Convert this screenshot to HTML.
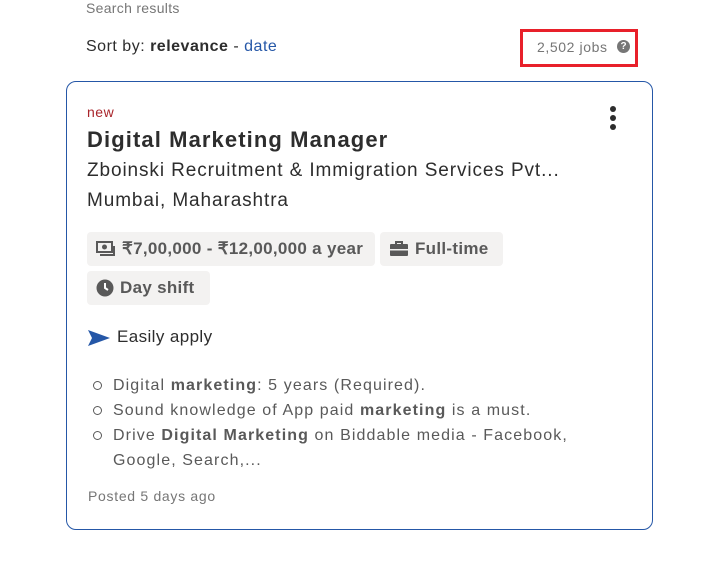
<!DOCTYPE html>
<html><head><meta charset="utf-8"><style>
*{margin:0;padding:0;box-sizing:border-box}
body{width:704px;height:572px;background:#fff;font-family:"Liberation Sans",sans-serif;color:#2d2d2d;position:relative;overflow:hidden}
.a{position:absolute;white-space:nowrap}
.tag{position:absolute;background:#f3f2f1;border-radius:4px;height:34px;font-weight:bold;font-size:17px;color:#595959;padding:0 9px;display:flex;align-items:center;gap:6px;letter-spacing:0.3px;white-space:nowrap}
li{list-style:none;position:relative;padding-left:25px}
li:before{content:"";position:absolute;left:5px;top:8px;width:7px;height:7px;border:1.5px solid #595959;border-radius:50%}
</style></head><body>
<div class="a" style="left:86px;top:0;font-size:14px;color:#767676;letter-spacing:0.3px">Search results</div>
<div class="a" style="left:86px;top:38px;font-size:16px;letter-spacing:0.5px">Sort by: <b>relevance</b> - <span style="color:#2557a7">date</span></div>
<div class="a" style="left:520px;top:29px;width:118px;height:38px;border:3px solid #e8202a"></div>
<div class="a" style="left:537px;top:39px;font-size:14px;color:#767676;letter-spacing:0.6px">2,502 jobs</div>
<div class="a" style="left:617px;top:40px;width:13px;height:13px;border-radius:50%;background:#767676;color:#fff;font-size:10px;font-weight:bold;text-align:center;line-height:13px">?</div>
<div class="a" style="left:66px;top:81px;width:587px;height:449px;border:1px solid #2557a7;border-radius:10px"></div>
<div class="a" style="left:610px;top:106px;width:6px;height:6px;border-radius:50%;background:#2d2d2d"></div>
<div class="a" style="left:610px;top:115px;width:6px;height:6px;border-radius:50%;background:#2d2d2d"></div>
<div class="a" style="left:610px;top:124px;width:6px;height:6px;border-radius:50%;background:#2d2d2d"></div>
<div class="a" style="left:87px;top:104px;font-size:14px;color:#a9252b;letter-spacing:0.5px">new</div>
<div class="a" style="left:87px;top:127px;font-size:22px;font-weight:bold;letter-spacing:1.1px">Digital Marketing Manager</div>
<div class="a" style="left:87px;top:160px;font-size:19px;letter-spacing:0.9px">Zboinski Recruitment &amp; Immigration Services Pvt...</div>
<div class="a" style="left:87px;top:190px;font-size:19px;letter-spacing:0.9px">Mumbai, Maharashtra</div>
<div class="tag" style="left:87px;top:232px;width:288px"><svg width="20" height="16" viewBox="0 0 20 16"><rect x="1" y="1" width="15" height="10" fill="none" stroke="#595959" stroke-width="2"/><circle cx="8.5" cy="6" r="2.5" fill="#595959"/><path d="M18 5v9H4" fill="none" stroke="#595959" stroke-width="2"/></svg>₹7,00,000 - ₹12,00,000 a year</div>
<div class="tag" style="left:380px;top:232px;width:123px"><svg width="20" height="16" viewBox="0 0 20 16"><path d="M7 3V1h6v2" fill="none" stroke="#595959" stroke-width="2"/><rect x="1" y="3" width="18" height="12" rx="1" fill="#595959"/><rect x="1" y="8" width="18" height="1.5" fill="#f3f2f1"/></svg>Full-time</div>
<div class="tag" style="left:87px;top:271px;width:123px"><svg width="18" height="18" viewBox="0 0 18 18"><circle cx="9" cy="9" r="8.5" fill="#595959"/><path d="M9 4v5l3 2" fill="none" stroke="#fff" stroke-width="2"/></svg>Day shift</div>
<svg class="a" style="left:88px;top:330px" width="22" height="16" viewBox="0 0 22 16"><path d="M0 0L22 8L0 16L4 8Z" fill="#2557a7"/></svg>
<div class="a" style="left:117px;top:327px;font-size:17px;letter-spacing:0.4px">Easily apply</div>
<ul class="a" style="left:88px;top:373px;font-size:16px;color:#595959;line-height:25px;letter-spacing:1.1px">
<li>Digital <b>marketing</b>: 5 years (Required).</li>
<li>Sound knowledge of App paid <b>marketing</b> is a must.</li>
<li>Drive <b>Digital Marketing</b> on Biddable media - Facebook,<br>Google, Search,...</li>
</ul>
<div class="a" style="left:88px;top:488px;font-size:14px;color:#767676;letter-spacing:0.7px">Posted 5 days ago</div>
</body></html>
